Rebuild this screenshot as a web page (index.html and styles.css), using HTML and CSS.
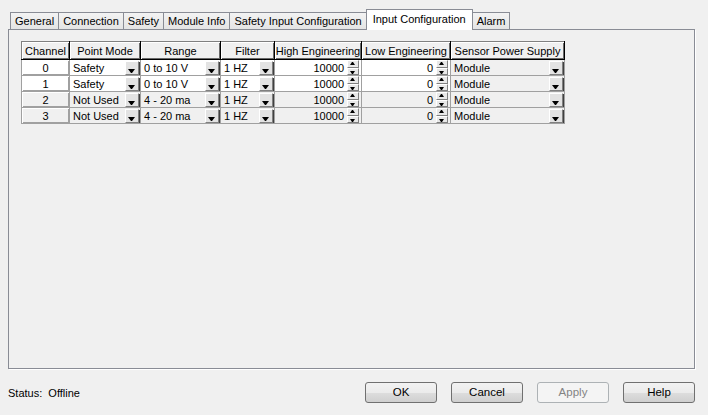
FILE: index.html
```html
<!DOCTYPE html>
<html lang="en">
<head>
	<meta charset="UTF-8">
	<title>Module Properties</title>
	<link rel="stylesheet" href="styles.css">
</head>
<body>
	<div class="dialog">
		<div class="tabs">
			<div class="tab">General</div>
			<div class="tab">Connection</div>
			<div class="tab">Safety</div>
			<div class="tab">Module Info</div>
			<div class="tab">Safety Input Configuration</div>
			<div class="tab active">Input Configuration</div>
			<div class="tab">Alarm</div>
		</div>

		<div class="page">
			<table class="grid">
				<colgroup>
					<col class="c-ch">
					<col class="c-mode">
					<col class="c-range">
					<col class="c-filter">
					<col class="c-high">
					<col class="c-low">
					<col class="c-sensor">
				</colgroup>
				<tr>
					<th>Channel</th>
					<th>Point Mode</th>
					<th>Range</th>
					<th>Filter</th>
					<th>High Engineering</th>
					<th>Low Engineering</th>
					<th>Sensor Power Supply</th>
				</tr>
				<tr class="on">
					<td class="ch">0</td>
					<td><div class="combo"><span>Safety</span><i class="drop"></i></div></td>
					<td><div class="combo"><span>0 to 10 V</span><i class="drop"></i></div></td>
					<td><div class="combo"><span>1 HZ</span><i class="drop"></i></div></td>
					<td><div class="spin"><span>10000</span><i class="updown"><b></b><b></b></i></div></td>
					<td><div class="spin"><span>0</span><i class="updown"><b></b><b></b></i></div></td>
					<td class="grey"><div class="combo"><span>Module</span><i class="drop"></i></div></td>
				</tr>
				<tr class="on">
					<td class="ch">1</td>
					<td><div class="combo"><span>Safety</span><i class="drop"></i></div></td>
					<td><div class="combo"><span>0 to 10 V</span><i class="drop"></i></div></td>
					<td><div class="combo"><span>1 HZ</span><i class="drop"></i></div></td>
					<td><div class="spin"><span>10000</span><i class="updown"><b></b><b></b></i></div></td>
					<td><div class="spin"><span>0</span><i class="updown"><b></b><b></b></i></div></td>
					<td class="grey"><div class="combo"><span>Module</span><i class="drop"></i></div></td>
				</tr>
				<tr>
					<td class="ch">2</td>
					<td><div class="combo"><span>Not Used</span><i class="drop"></i></div></td>
					<td><div class="combo"><span>4 - 20 ma</span><i class="drop"></i></div></td>
					<td><div class="combo"><span>1 HZ</span><i class="drop"></i></div></td>
					<td><div class="spin"><span>10000</span><i class="updown"><b></b><b></b></i></div></td>
					<td><div class="spin"><span>0</span><i class="updown"><b></b><b></b></i></div></td>
					<td class="grey"><div class="combo"><span>Module</span><i class="drop"></i></div></td>
				</tr>
				<tr>
					<td class="ch">3</td>
					<td><div class="combo"><span>Not Used</span><i class="drop"></i></div></td>
					<td><div class="combo"><span>4 - 20 ma</span><i class="drop"></i></div></td>
					<td><div class="combo"><span>1 HZ</span><i class="drop"></i></div></td>
					<td><div class="spin"><span>10000</span><i class="updown"><b></b><b></b></i></div></td>
					<td><div class="spin"><span>0</span><i class="updown"><b></b><b></b></i></div></td>
					<td class="grey"><div class="combo"><span>Module</span><i class="drop"></i></div></td>
				</tr>
			</table>
		</div>

		<div class="footer">
			<div class="status">Status:&nbsp; Offline</div>
			<div class="button">OK</div>
			<div class="button">Cancel</div>
			<div class="button disabled">Apply</div>
			<div class="button">Help</div>
		</div>
	</div>
</body>
</html>
```

FILE: styles.css
```css
body {
	margin: 0;
	background-color: #f0f0f0;
	font-family: "Liberation Sans", Arial, sans-serif;
	font-size: 11px;
	color: #000;
}

.dialog {
	width: 708px;
	height: 415px;
}

/* tabs */
.tabs {
	display: flex;
	align-items: flex-end;
	height: 29px;
	padding-left: 10px;
	box-sizing: border-box;
}

.tab {
	height: 16px;
	line-height: 17px;
	padding: 0 4px;
	border: 1px solid #898c95;
	border-bottom: none;
	margin-right: -1px;
	background: linear-gradient(#f3f3f3, #e4e4e4);
	color: #000;
	white-space: nowrap;
}

.tab.active {
	position: relative;
	z-index: 2;
	height: 20px;
	line-height: 18px;
	padding: 0 6px;
	margin-bottom: -1px;
	background: #fff;
}

.page {
	margin-left: 8px;
	width: 687px;
	height: 340px;
	box-sizing: border-box;
	border: 1px solid #898c95;
	box-shadow: 1px 1px 0 #fff;
	padding: 11px 0 0 12px;
}

/* grid */
.grid {
	border-collapse: collapse;
	table-layout: fixed;
	width: 543px;
	border: 1px solid #808080;
}

.c-ch { width: 48px; }
.c-mode { width: 71px; }
.c-range { width: 80px; }
.c-filter { width: 54px; }
.c-high { width: 87px; }
.c-low { width: 89px; }
.c-sensor { width: 114px; }

.grid th {
	height: 17px;
	padding: 0;
	font-weight: normal;
	text-align: center;
	white-space: nowrap;
	overflow: hidden;
	background-color: #f0f0f0;
	border: 1px solid #808080;
	border-right-color: #000;
	border-bottom-color: #000;
	box-shadow: inset 1px 1px 0 #fff, inset -1px -1px 0 #696969;
}

.grid td {
	height: 15px;
	padding: 0;
	border: 1px solid #a0a0a0;
	background-color: #f0f0f0;
	white-space: nowrap;
	overflow: hidden;
}

.grid tr.on td {
	background-color: #fff;
}

.grid tr.on td.grey,
.grid td.ch {
	background-color: #f0f0f0;
}

.grid td.ch {
	text-align: center;
	box-shadow: inset 1px 1px 0 #fff, inset -1px -1px 0 #a0a0a0;
}

.combo,
.spin {
	display: flex;
	align-items: center;
	justify-content: space-between;
	height: 15px;
	padding-left: 3px;
}

.spin {
	justify-content: flex-end;
}

.spin span {
	margin-right: 3px;
}

.drop {
	position: relative;
	width: 14px;
	height: 14px;
	margin-right: 1px;
	box-sizing: border-box;
	background-color: #e3e3e3;
	border: 1px solid;
	border-color: #fff #808080 #808080 #fff;
	box-shadow: 1px 1px 0 #404040;
}

.drop::after {
	content: "";
	position: absolute;
	left: 2px;
	bottom: 1px;
	width: 1px;
	height: 0;
	border-left: 3px solid transparent;
	border-right: 3px solid transparent;
	border-top: 4px solid #000;
}

.updown {
	display: flex;
	flex-direction: column;
	width: 12px;
	height: 15px;
	margin-right: 2px;
}

.updown b {
	position: relative;
	flex: 1;
	box-sizing: border-box;
	background-color: #e8e8e8;
	border: 1px solid;
	border-color: #fff #808080 #808080 #fff;
}

.updown b::after {
	content: "";
	position: absolute;
	left: 2px;
	width: 1px;
	height: 0;
	border-left: 2px solid transparent;
	border-right: 2px solid transparent;
}

.updown b:first-child::after {
	top: 1px;
	border-bottom: 3px solid #000;
}

.updown b:last-child::after {
	top: 2px;
	border-top: 3px solid #000;
}

/* footer */
.footer {
	display: flex;
	align-items: center;
	gap: 14px;
	margin-top: 13px;
	padding: 0 13px 0 8px;
}

.status {
	flex: 1;
}

.button {
	width: 72px;
	height: 21px;
	box-sizing: border-box;
	text-align: center;
	font-size: 11.5px;
	line-height: 19px;
	border: 1px solid #707070;
	border-radius: 3px;
	background: linear-gradient(#f2f2f2 0%, #ebebeb 50%, #dddddd 51%, #cfcfcf 100%);
}

.button.disabled {
	color: #838383;
	border-color: #adb2b5;
	background: #f4f4f4;
}
```
